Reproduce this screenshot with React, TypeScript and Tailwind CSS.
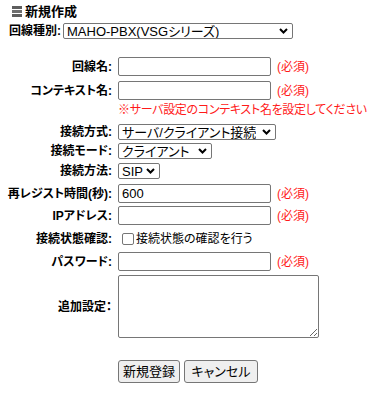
import React from "react";

const jp = "font-['Liberation_Sans','Noto_Sans_CJK_JP',sans-serif] [font-feature-settings:'palt']";

function Chevron() {
    return (
        <svg width="9" height="6" viewBox="0 0 9 6" className="shrink-0">
            <path d="M1 1 L4.5 4.5 L8 1" fill="none" stroke="#000" strokeWidth="2" />
        </svg>
    );
}

function FakeSelect({ value, width }: { value: string; width: string }) {
    return (
        <div
            className={`${width} h-[16px] border border-[#767676] rounded-[2px] bg-white flex items-center justify-between pl-[3px] pr-[4px] text-[13px] leading-none text-black`}
        >
            <span className="whitespace-nowrap overflow-hidden">{value}</span>
            <Chevron />
        </div>
    );
}

function Label({ text }: { text: string }) {
    return (
        <div className="w-[113px] shrink-0 text-right font-bold text-[12px] pr-[1px] whitespace-nowrap">
            {text}
        </div>
    );
}

function Required() {
    return <span className="ml-[6px] text-[12px] text-[#ff1a1a]">(必須)</span>;
}

function TextRow({ label, value, mt }: { label: string; value?: string; mt: string }) {
    return (
        <div className={`flex items-center h-[19px] ${mt}`}>
            <Label text={label} />
            <input
                defaultValue={value}
                className="ml-[5px] w-[153px] h-[19px] border border-[#767676] rounded-[2px] px-[3px] text-[13px] outline-none"
            />
            <Required />
        </div>
    );
}

function SelectRow({ label, value, width, mt }: { label: string; value: string; width: string; mt: string }) {
    return (
        <div className={`flex items-center h-[16px] ${mt}`}>
            <Label text={label} />
            <div className="ml-[5px]">
                <FakeSelect value={value} width={width} />
            </div>
        </div>
    );
}

export default function App() {
    return (
        <div className={`w-[383px] h-[400px] bg-white text-black ${jp}`}>
            <div className="h-[23px] flex items-center pl-[12px]">
                <div className="w-[10px] h-[11px] flex flex-col gap-[1px] mr-[3px]">
                    <div className="h-[3px] bg-[#5e5e5e]" />
                    <div className="h-[3px] bg-[#6e6e6e]" />
                    <div className="h-[3px] bg-[#5e5e5e]" />
                </div>
                <span className="font-bold text-[13px]">新規作成</span>
            </div>

            <div className="flex items-center h-[16px] pl-[9px]">
                <span className="font-bold text-[12px]">回線種別:</span>
                <div className="ml-[2px]">
                    <FakeSelect value="MAHO-PBX(VSGシリーズ)" width="w-[230px]" />
                </div>
            </div>

            <TextRow label="回線名:" mt="mt-[18px]" />
            <TextRow label="コンテキスト名:" mt="mt-[5px]" />
            <div className="h-[14px] mt-[3px] pl-[118px] flex items-center text-[12px] tracking-[-0.3px] text-[#ff1a1a] whitespace-nowrap">
                ※サーバ設定のコンテキスト名を設定してください
            </div>

            <SelectRow label="接続方式:" value="サーバ/クライアント接続" width="w-[158px]" mt="mt-[7px]" />
            <SelectRow label="接続モード:" value="クライアント" width="w-[94px]" mt="mt-[3px]" />
            <SelectRow label="接続方法:" value="SIP" width="w-[42px]" mt="mt-[4px]" />

            <TextRow label="再レジスト時間(秒):" value="600" mt="mt-[5px]" />
            <TextRow label="IPアドレス:" mt="mt-[3px]" />

            <div className="flex items-center h-[19px] mt-[4px]">
                <Label text="接続状態確認:" />
                <label className="ml-[9px] flex items-center gap-[2px] text-[12px]">
                    <span className="w-[12px] h-[12px] border border-[#767676] rounded-[2px] bg-white" />
                    接続状態の確認を行う
                </label>
            </div>

            <TextRow label="パスワード:" mt="mt-[4px]" />

            <div className="flex items-center h-[63px] mt-[4px]">
                <Label text="追加設定：" />
                <textarea className="ml-[5px] w-[201px] h-[63px] border border-[#767676] rounded-[2px] outline-none" />
            </div>

            <div className="flex mt-[22px] pl-[118px] gap-[4px]">
                <button className="w-[62px] h-[23px] bg-[#efefef] border border-[#767676] rounded-[3px] text-[13px]">
                    新規登録
                </button>
                <button className="w-[74px] h-[23px] bg-[#efefef] border border-[#767676] rounded-[3px] text-[13px]">
                    キャンセル
                </button>
            </div>
        </div>
    );
}
